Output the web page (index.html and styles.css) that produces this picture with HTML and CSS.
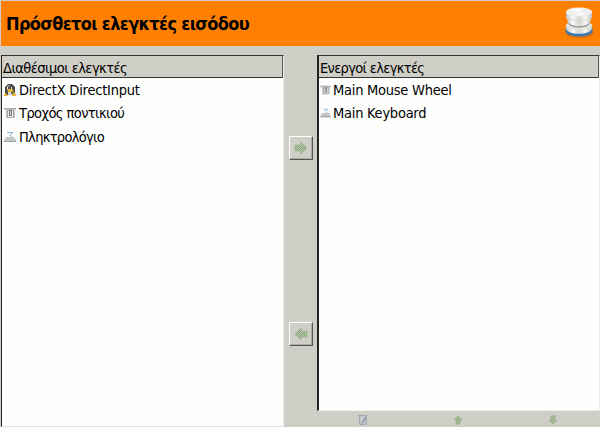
FILE: index.html
```html
<!DOCTYPE html>
<html lang="el">
<head>
<meta charset="utf-8">
<title>Πρόσθετοι ελεγκτές εισόδου</title>
<link rel="stylesheet" href="styles.css">
</head>
<body>
<svg class="defs" aria-hidden="true">
  <defs>
    <linearGradient id="silver" x1="0" x2="1"><stop offset="0" stop-color="#c0c0be"/><stop offset=".25" stop-color="#fafaf8"/><stop offset=".5" stop-color="#d5d5d2"/><stop offset=".75" stop-color="#f8f8f6"/><stop offset="1" stop-color="#bebeba"/></linearGradient>
    <pattern id="dither" width="2" height="2" patternUnits="userSpaceOnUse"><path fill="#8bab7e" d="M0 0h2v2H0z"/><path fill="#b3c6a5" d="M0 0h1v1H0zM1 1h1v1H1z"/></pattern>
    <symbol id="wheel" viewBox="0 0 12 12"><path fill="#c2c3c2" d="M0 1h12v2h-1v8H2V3H0z"/><path fill="#eeeeec" d="M3 4h7v6H3z"/><path d="M0 1.5h12M3.5 3v7M9.5 3v7M3 10.5h7" stroke="#a9aca9" fill="none"/><path fill="#737876" d="M5 3h3v6H5z"/><path fill="#d9dddb" d="M6 4h1v4H6z"/></symbol>
    <symbol id="keyboard" viewBox="0 0 12 12"><path d="M3 1.5h6L6 4l2 2" stroke="#8fb9dc" fill="none"/><path fill="#bfc2c2" d="M2 6h8l2 3v2H0V9z"/><path d="M2 7.5h8M1 9.5h10" stroke="#d5d8d7" stroke-dasharray="1 1"/><path d="M0 10.5h12" stroke="#999fa1"/></symbol>
    <symbol id="arrow" viewBox="0 0 14 14"><path fill="url(#dither)" stroke="#8da580" stroke-width=".7" stroke-dasharray="1.5 .7" d="M1 4h6V1l6 6-6 6v-3H1z"/></symbol>
  </defs>
</svg>
<header class="title-bar">
  <h1>Πρόσθετοι ελεγκτές εισόδου</h1>
  <svg class="logo" viewBox="0 0 30 34">
    <ellipse cx="15.5" cy="26.5" rx="14" ry="5.5" fill="#ad6a24" opacity=".65"/>
    <path fill="#3978b8" d="M1.5 22v3c1 7 26 7 27 0v-3z"/>
    <path fill="url(#silver)" d="M2 20v2.500c1 7 25 7 26 0V20z"/>
    <ellipse cx="15" cy="19.500" rx="13" ry="4.500" fill="#e4e4e1"/>
    <path fill="#8e8f8c" d="M4 15c2 7 20 7 22 0v2c-2 6-20 6-22 0z"/>
    <path fill="url(#silver)" d="M2 6v5l2 5c2 5 20 5 22 0l2-5V6z"/>
    <path fill="none" stroke="#d2d2cf" stroke-width=".8" d="M2 10c2 6 24 6 26 0"/>
    <ellipse cx="15" cy="6" rx="13" ry="4.500" fill="#eeeeec"/>
    <path fill="#fff" opacity=".75" d="M6 4l9 2 3-4zM24 8l-9-2-4 4z"/>
  </svg>
</header>
<main class="workspace">
  <section class="panel available">
    <h2><span class="t-available">Διαθέσιμοι ελεγκτές</span></h2>
    <ul>
      <li><svg class="icon" viewBox="0 0 12 12"><path fill="#4b4a48" d="M1 3l3-3h4l3 3v8H1z"/><path fill="#8c8983" d="M2 3l2-2h3L5 3z"/><path fill="#d7d8d5" d="M4 8h3l1 3H4z"/><path fill="#eeeeeb" d="M3 3h1v2H3zM7 3h1v2H7z"/><path fill="#e7b638" d="M3 5h5l2 2-3 1H4zM0 10l2-1 2 3H0zM9 8l3 2v2H8z"/></svg><span class="t-directx">DirectX DirectInput</span></li>
      <li><svg class="icon"><use href="#wheel"/></svg><span class="t-wheel">Τροχός ποντικιού</span></li>
      <li><svg class="icon"><use href="#keyboard"/></svg><span class="t-keyboard">Πληκτρολόγιο</span></li>
    </ul>
  </section>
  <nav class="transfer">
    <button aria-label="Προσθήκη"><svg><use href="#arrow"/></svg></button>
    <button aria-label="Αφαίρεση"><svg class="left"><use href="#arrow"/></svg></button>
  </nav>
  <div class="active-column">
    <section class="panel active">
      <h2><span class="t-active">Ενεργοί ελεγκτές</span></h2>
      <ul>
        <li><svg class="icon small"><use href="#wheel"/></svg><span class="t-main-wheel">Main Mouse Wheel</span></li>
        <li><svg class="icon small"><use href="#keyboard"/></svg><span class="t-main-keyboard">Main Keyboard</span></li>
      </ul>
    </section>
    <footer class="tools">
      <svg viewBox="0 0 10 10"><path fill="#bbc1c3" d="M1 0h8v10H1z"/><path d="M1.500 0v10M8.500 0v10M2 .5h6M2 9.500h6" stroke="#8896a5" stroke-dasharray="1 1"/><path d="M3 3h3M3 5h2M3 7h2" stroke="#e3e5e2"/><path d="M8 2L4 8" stroke="#8d9cad" stroke-width="1.500"/></svg>
      <svg class="up"><use href="#arrow"/></svg>
      <svg class="down"><use href="#arrow"/></svg>
    </footer>
  </div>
</main>
</body>
</html>
```
FILE: styles.css
```css
* { box-sizing: border-box; }
body {
  margin: 0;
  width: 600px;
  height: 427px;
  overflow: hidden;
  padding: 1px 0 0 1px;
  background: #d0cfc7;
  color: #000;
  font: 14.5px "DejaVu Sans Condensed", "DejaVu Sans", sans-serif;
  font-stretch: condensed;
}
.defs { display: block; width: 0; height: 0; }
.title-bar {
  display: flex;
  justify-content: space-between;
  height: 45px;
  padding: 5px 6px 0 5px;
  background: #ff8000;
}
h1 { margin: 0; font-size: 18px; line-height: 36px; letter-spacing: -0.66px; white-space: nowrap; }
.logo { width: 30px; height: 34px; }
.workspace { display: flex; height: 381px; padding-top: 9px; }
.panel {
  background: #fefefc;
  border-top: 1px solid #333;
  border-left: 1px solid #222;
}
.available { width: 283px; height: 372px; border-right: 1px solid #eeeee8; border-bottom: 1px solid #e3e3dc; }
h2 {
  height: 22px;
  margin: 0;
  padding-left: 1px;
  background: #d0cfc7;
  border-right: 1px solid #555;
  border-bottom: 1px solid #333;
  font-size: 14.5px;
  font-weight: normal;
  line-height: 24px;
  white-space: nowrap;
}
ul { list-style: none; margin: 0; padding: 0 0 0 2px; }
li { display: flex; align-items: center; height: 23.5px; white-space: nowrap; }
.icon { width: 12px; height: 12px; margin-right: 3px; flex: none; }
.icon.small { width: 11px; height: 10px; margin-right: 2px; }
.t-available { letter-spacing: -0.53px; }
.t-directx { letter-spacing: -0.22px; }
.t-wheel { letter-spacing: -0.58px; }
.t-keyboard { letter-spacing: -0.7px; }
.t-active { letter-spacing: -0.66px; }
.t-main-wheel, .t-main-keyboard { letter-spacing: -0.25px; }
.transfer { width: 33px; padding: 81px 0 0 5px; }
.transfer button {
  display: flex;
  align-items: center;
  justify-content: center;
  width: 24px;
  height: 24px;
  margin: 0 0 162px;
  padding: 0;
  background: #d0cfc7;
  border: 1px solid #fff;
  border-right-color: #555;
  border-bottom-color: #555;
  box-shadow: inset -1px -1px #aaa9a2;
}
.transfer svg { width: 14px; height: 14px; }
.left { transform: scaleX(-1); }
.active-column { width: 283px; }
.active { height: 356px; border-left: 2px solid #222; border-bottom: 1px solid #eeeee8; border-right: 1px solid #eeeee8; }
.active ul { padding-left: 1px; }
.tools { display: grid; grid-template-columns: repeat(3, 95px); width: 281px; height: 16px; margin-left: -2px; padding-top: 4px; }
.tools svg { width: 10px; height: 10px; justify-self: center; }
.up { transform: rotate(-90deg); }
.down { transform: rotate(90deg); }
```
